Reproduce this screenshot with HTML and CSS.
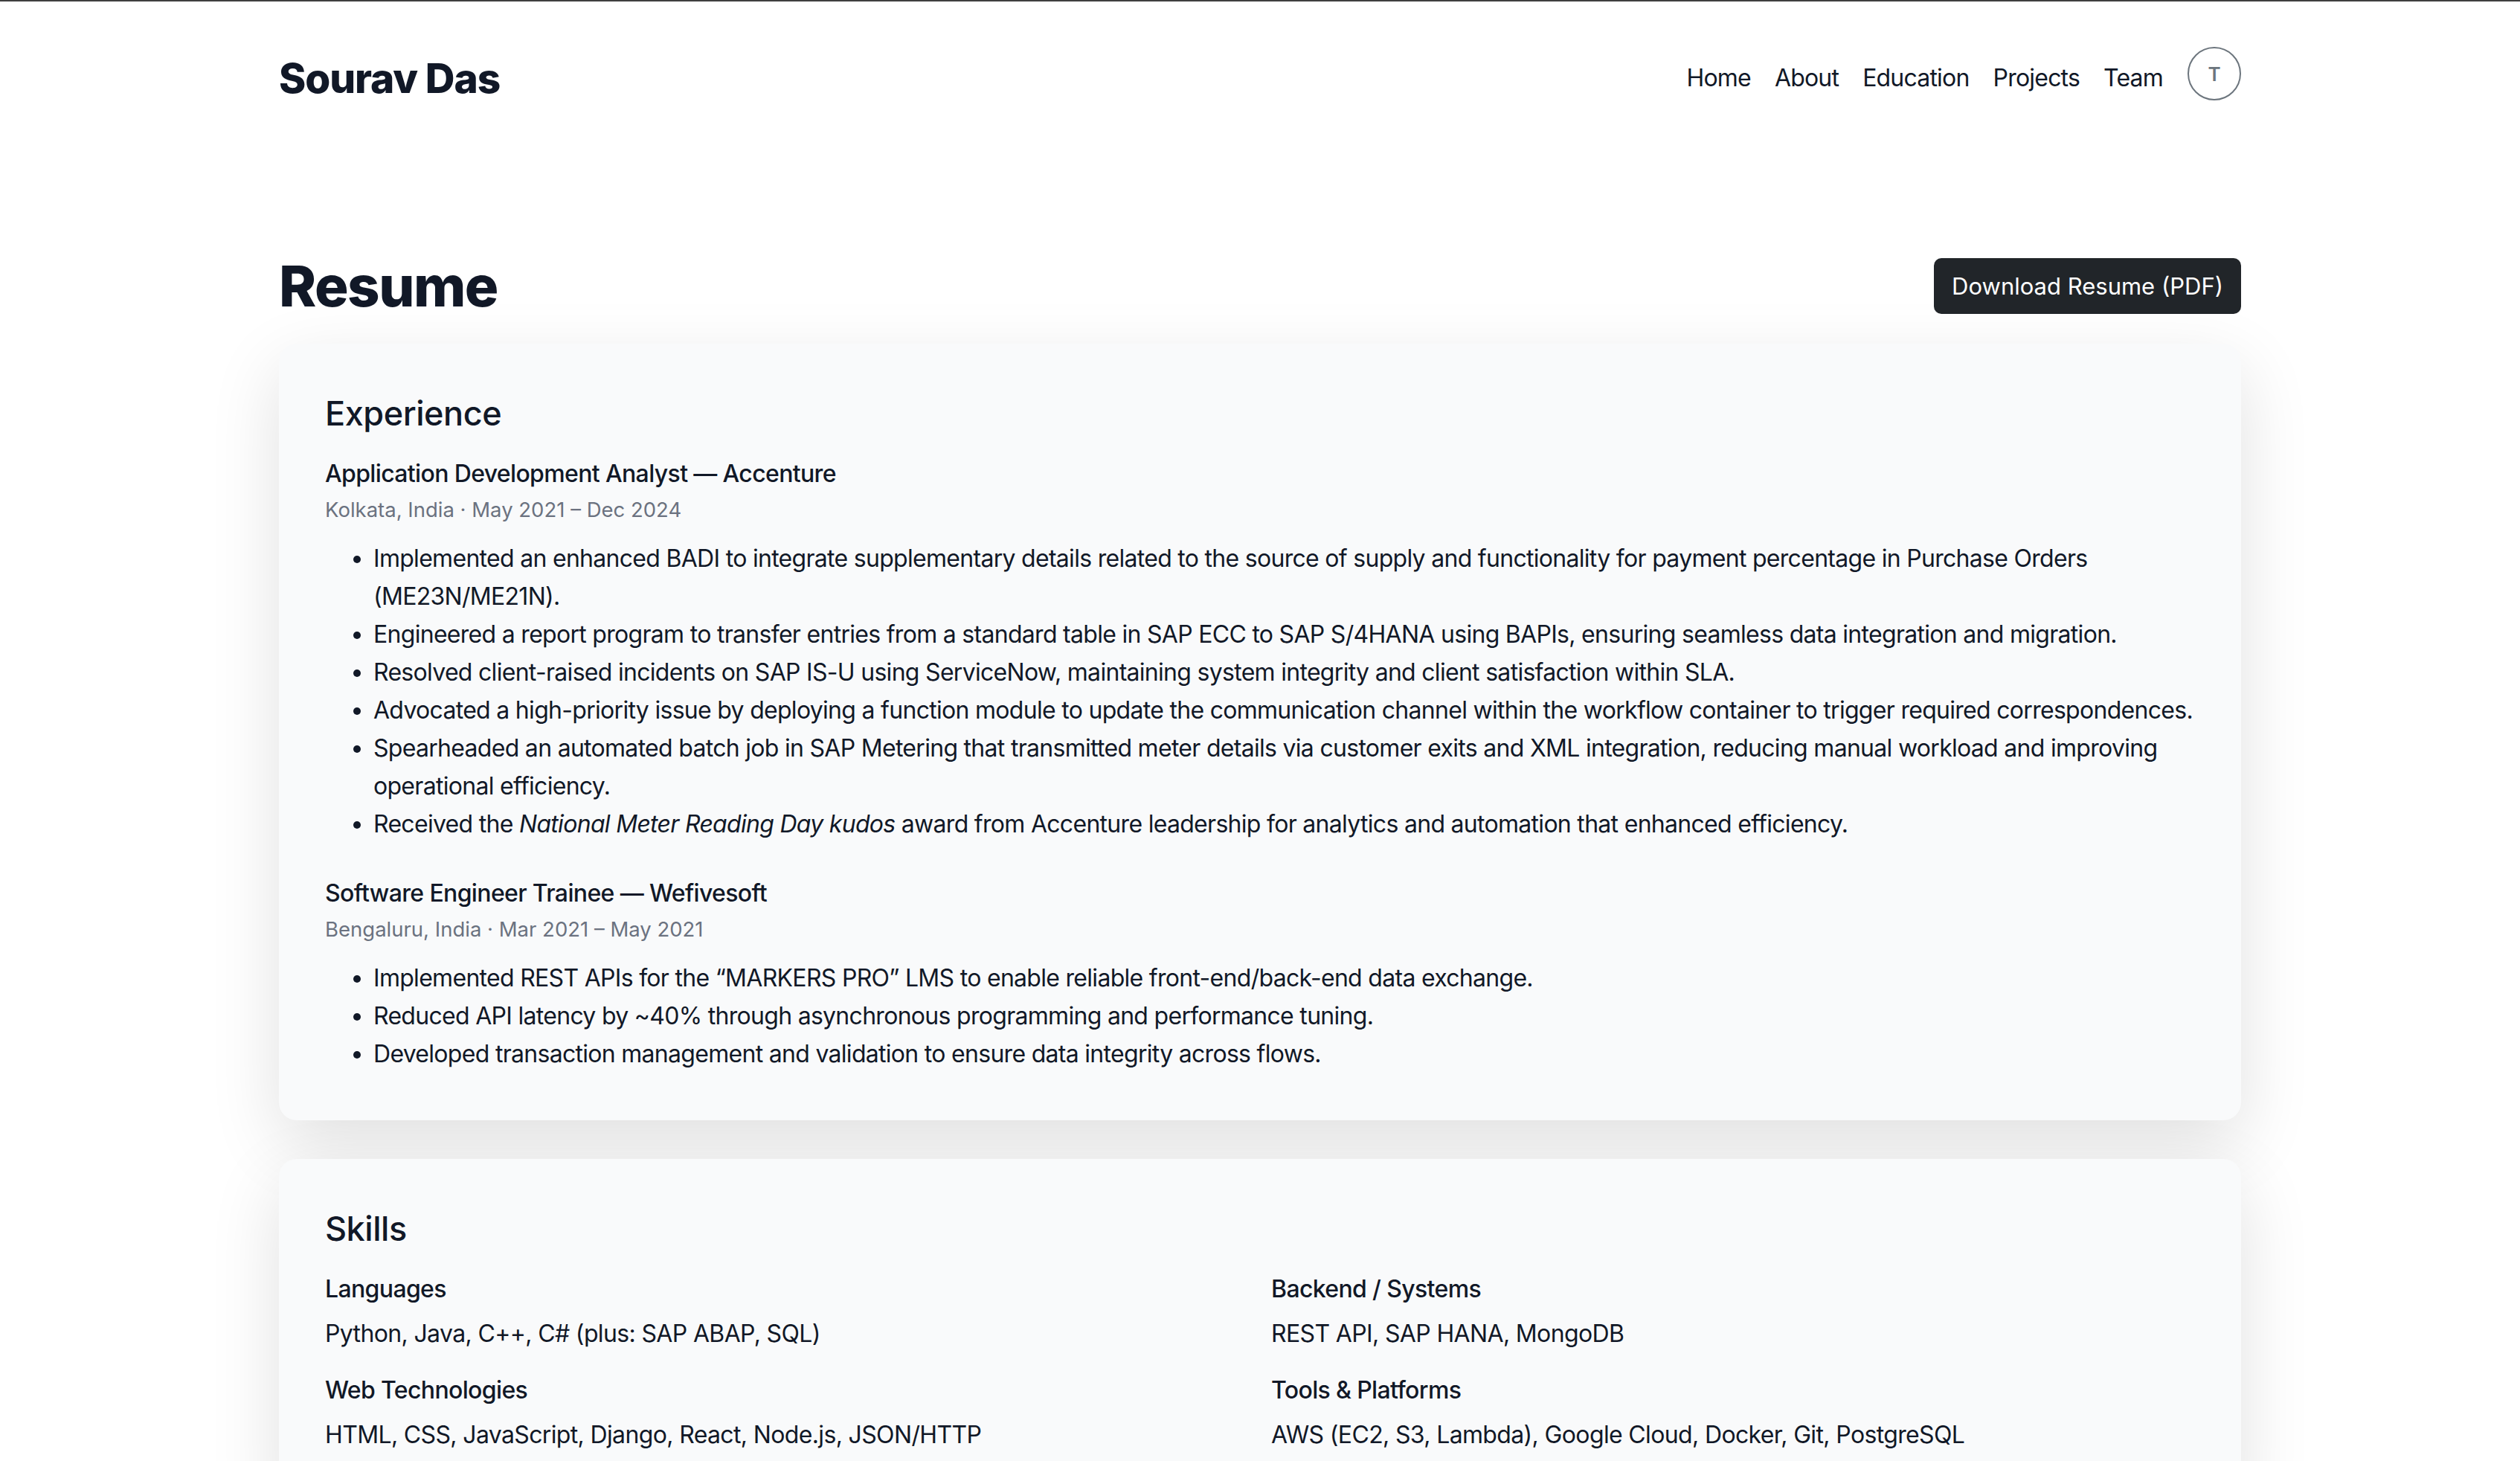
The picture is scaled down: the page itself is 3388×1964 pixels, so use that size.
FILE: index.html
```html
<!DOCTYPE html>
<html lang="en">
<head>
<meta charset="utf-8">
<title>Sourav Das — Resume</title>
<link rel="stylesheet" href="styles.css">
</head>
<body>
<div class="topline"></div>
<header class="container header">
  <a class="brand" href="#">Sourav Das</a>
  <nav class="nav">
    <a href="#">Home</a>
    <a href="#">About</a>
    <a href="#">Education</a>
    <a href="#">Projects</a>
    <a href="#">Team</a>
    <button class="theme-btn" type="button">T</button>
  </nav>
</header>

<main class="container main">
  <div class="page-head">
    <h1 class="page-title">Resume</h1>
    <a class="btn-dark" href="#">Download Resume (PDF)</a>
  </div>

  <section class="card">
    <h2 class="card-title">Experience</h2>

    <div class="job">
      <h3 class="job-title">Application Development Analyst — Accenture</h3>
      <div class="job-meta">Kolkata, India · May 2021 – Dec 2024</div>
      <ul class="bullets">
        <li>Implemented an enhanced BADI to integrate supplementary details related to the source of supply and functionality for payment percentage in Purchase Orders (ME23N/ME21N).</li>
        <li>Engineered a report program to transfer entries from a standard table in SAP ECC to SAP S/4HANA using BAPIs, ensuring seamless data integration and migration.</li>
        <li>Resolved client-raised incidents on SAP IS-U using ServiceNow, maintaining system integrity and client satisfaction within SLA.</li>
        <li>Advocated a high-priority issue by deploying a function module to update the communication channel within the workflow container to trigger required correspondences.</li>
        <li>Spearheaded an automated batch job in SAP Metering that transmitted meter details via customer exits and XML integration, reducing manual workload and improving operational efficiency.</li>
        <li>Received the <em>National Meter Reading Day kudos</em> award from Accenture leadership for analytics and automation that enhanced efficiency.</li>
      </ul>
    </div>

    <div class="job">
      <h3 class="job-title">Software Engineer Trainee — Wefivesoft</h3>
      <div class="job-meta">Bengaluru, India · Mar 2021 – May 2021</div>
      <ul class="bullets">
        <li>Implemented REST APIs for the “MARKERS PRO” LMS to enable reliable front-end/back-end data exchange.</li>
        <li>Reduced API latency by ~40% through asynchronous programming and performance tuning.</li>
        <li>Developed transaction management and validation to ensure data integrity across flows.</li>
      </ul>
    </div>
  </section>

  <section class="card">
    <h2 class="card-title">Skills</h2>
    <div class="skills">
      <div class="skill">
        <h3 class="skill-label">Languages</h3>
        <p class="skill-value">Python, Java, C++, C# (plus: SAP ABAP, SQL)</p>
      </div>
      <div class="skill">
        <h3 class="skill-label">Backend / Systems</h3>
        <p class="skill-value">REST API, SAP HANA, MongoDB</p>
      </div>
      <div class="skill">
        <h3 class="skill-label">Web Technologies</h3>
        <p class="skill-value">HTML, CSS, JavaScript, Django, React, Node.js, JSON/HTTP</p>
      </div>
      <div class="skill">
        <h3 class="skill-label">Tools &amp; Platforms</h3>
        <p class="skill-value">AWS (EC2, S3, Lambda), Google Cloud, Docker, Git, PostgreSQL</p>
      </div>
    </div>
  </section>
</main>
</body>
</html>
```

FILE: styles.css
```css
* { box-sizing: border-box; }

html, body {
  margin: 0;
  padding: 0;
  background: #ffffff;
}

body {
  font-family: Inter, "Noto Sans", "Liberation Sans", sans-serif;
  color: #111827;
  font-size: 32px;
  line-height: 1.6;
}

.topline {
  height: 2px;
  background: #3f3f3f;
}

.container {
  width: 2638px;
  margin: 0 auto;
}

.header {
  display: flex;
  align-items: center;
  justify-content: space-between;
  padding-top: 61px;
}

.brand {
  font-size: 55px;
  font-weight: 800;
  letter-spacing: -0.02em;
  line-height: 1.2;
  color: #111827;
  text-decoration: none;
}

.nav {
  display: flex;
  align-items: center;
  gap: 32px;
}

.nav a {
  color: #111827;
  text-decoration: none;
  font-size: 32px;
  line-height: 1.5;
  letter-spacing: -0.025em;
}

.theme-btn {
  width: 72px;
  height: 72px;
  margin-left: 1px;
  margin-bottom: 12px;
  border: 2px solid #6c757d;
  border-radius: 50%;
  background: transparent;
  color: #6c757d;
  font-family: inherit;
  font-size: 26px;
  font-weight: 600;
  padding: 0;
  display: flex;
  align-items: center;
  justify-content: center;
}

.main {
  padding-top: 192px;
  padding-bottom: 80px;
}

.page-head {
  display: flex;
  align-items: center;
  justify-content: space-between;
  margin-bottom: 32px;
}

.page-title {
  margin: 0;
  font-size: 76px;
  font-weight: 800;
  letter-spacing: -0.02em;
  line-height: 1.2;
}

.btn-dark {
  display: inline-block;
  background: #212529;
  color: #ffffff;
  text-decoration: none;
  font-size: 31px;
  line-height: 75px;
  height: 75px;
  padding: 0 24px;
  border-radius: 10px;
}

.card {
  background: #f9fafb;
  border-radius: 24px;
  padding: 64px 56px 64px 62px;
  box-shadow: 0 32px 96px rgba(0, 0, 0, 0.12);
  margin-bottom: 52px;
}

.card-title {
  margin: 0 0 28px;
  font-size: 45px;
  font-weight: 500;
  line-height: 60px;
  letter-spacing: -0.01em;
}

.job + .job {
  margin-top: 45px;
}

.job-title {
  margin: 0 0 6px;
  font-size: 32px;
  font-weight: 500;
  line-height: 45px;
  letter-spacing: -0.02em;
}

.job-meta {
  font-size: 27.5px;
  line-height: 40px;
  color: #6b7280;
}

.bullets {
  margin: 20px 0 0;
  padding-left: 65px;
}

.bullets li {
  font-size: 32px;
  line-height: 51px;
  letter-spacing: -0.022em;
}

.skills {
  display: grid;
  grid-template-columns: 1272px 1fr;
  column-gap: 0;
  row-gap: 28px;
}

.skill-label {
  margin: 0 0 12px;
  font-size: 32px;
  font-weight: 500;
  line-height: 45px;
  letter-spacing: -0.02em;
}

.skill-value {
  margin: 0;
  font-size: 32px;
  line-height: 51px;
  letter-spacing: -0.02em;
}
```
